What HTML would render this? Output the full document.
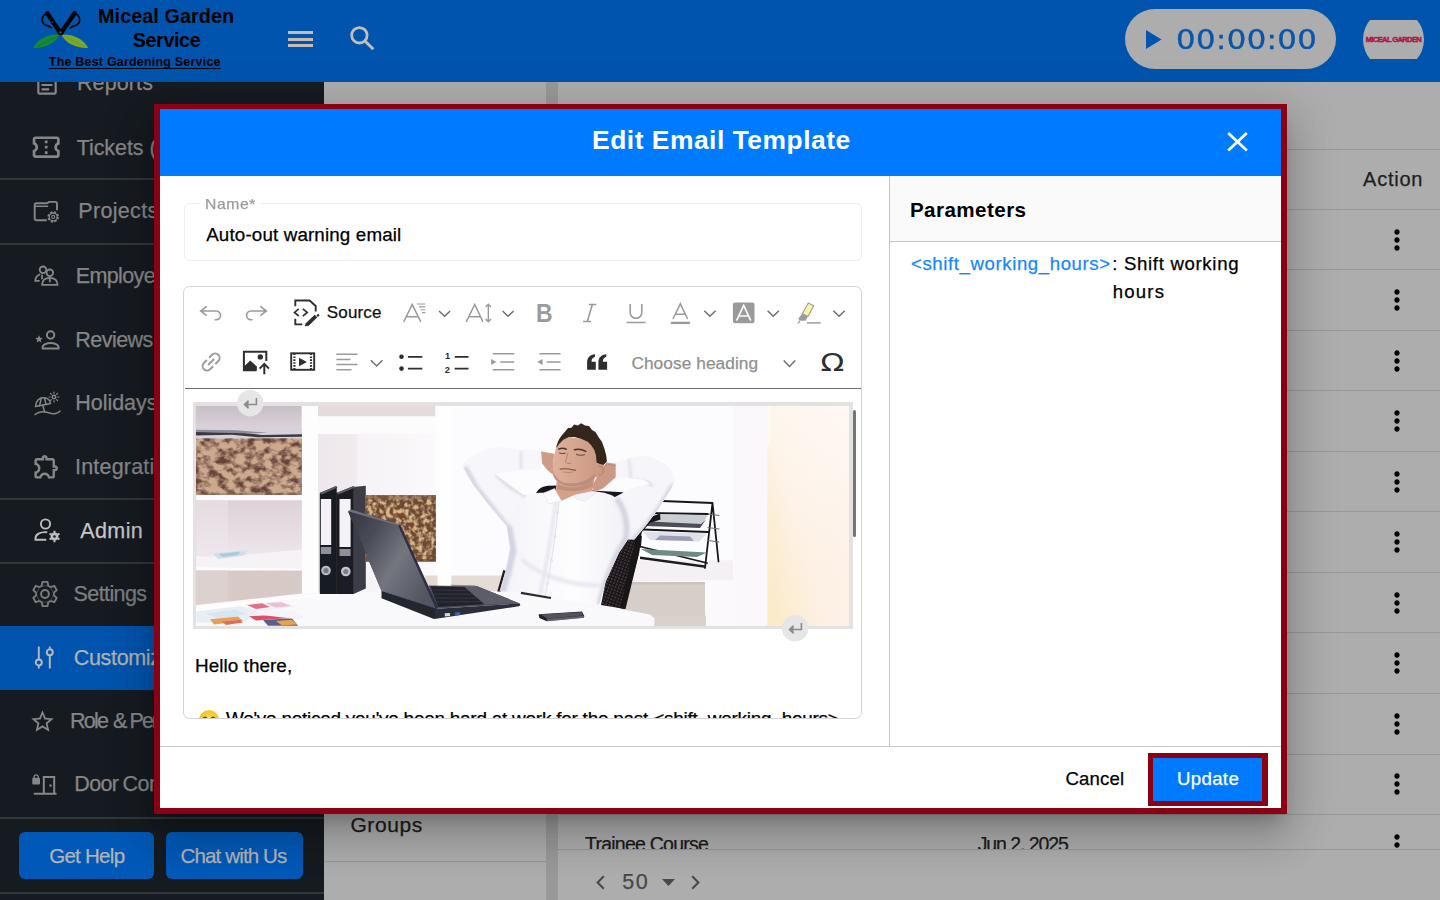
<!DOCTYPE html>
<html lang="en">
<head>
<meta charset="utf-8">
<title>Edit Email Template</title>
<style>
*{box-sizing:border-box;margin:0;padding:0}
html,body{width:1440px;height:900px;overflow:hidden;background:#adadad;font-family:"Liberation Sans",sans-serif;color:#000}
.abs{position:absolute}
.t{position:absolute;white-space:nowrap;line-height:1}
svg{position:absolute;overflow:visible}
#page{position:absolute;left:0;top:0;width:1440px;height:900px;overflow:hidden;background:#adadad}
#topbar{position:absolute;left:0;top:0;width:1440px;height:82px;background:#0054ad;z-index:5}
#sidebar{position:absolute;left:0;top:0;width:324px;height:900px;background:#161b21;overflow:hidden}
.sdiv{position:absolute;left:0;width:324px;height:2px;background:#32373b}
#sactive{position:absolute;left:0;top:626px;width:324px;height:63.5px;background:#0054ad}
.sbtn{position:absolute;top:832px;height:47px;border-radius:6px;background:#0059b8}
.hl{position:absolute;height:1px;background:#979797}
#modal{position:absolute;left:154px;top:104px;width:1133px;height:710px;background:#fff;border:6px solid #8c0014;border-top-width:5px;z-index:20;
 box-shadow:0 11px 15px -7px rgba(0,0,0,.2),0 24px 38px 3px rgba(0,0,0,.14),0 9px 46px 8px rgba(0,0,0,.12)}
#modal .in{position:absolute;left:-160px;top:-109px;width:1440px;height:900px}
#mhead{position:absolute;left:160px;top:109px;width:1121px;height:67px;background:#007bff}

</style>
</head>
<body>
<div id="page">
<div id="sidebar">
<div id="sactive"></div>
<div class="sdiv" style="top:178px"></div>
<div class="sdiv" style="top:243px"></div>
<div class="sdiv" style="top:497.5px"></div>
<div class="sdiv" style="top:561.5px"></div>
<div class="sdiv" style="top:816.5px"></div>
<div class="sdiv" style="top:892px"></div>
<div class="t" style="left:76.94px;top:71.00px;font-size:21.5px;color:#868686;letter-spacing:0.124px;-webkit-text-stroke:.25px;line-height:24px;">Reports</div>
<div class="t" style="left:76.72px;top:136.00px;font-size:21.5px;color:#868686;letter-spacing:-0.073px;-webkit-text-stroke:.25px;line-height:24px;">Tickets (3)</div>
<div class="t" style="left:78.24px;top:199.00px;font-size:21.5px;color:#868686;letter-spacing:0.333px;-webkit-text-stroke:.25px;line-height:24px;">Projects</div>
<div class="t" style="left:75.74px;top:264.00px;font-size:21.5px;color:#868686;letter-spacing:-0.619px;-webkit-text-stroke:.25px;line-height:24px;">Employees</div>
<div class="t" style="left:75.24px;top:328.00px;font-size:21.5px;color:#868686;letter-spacing:-0.518px;-webkit-text-stroke:.25px;line-height:24px;">Reviews</div>
<div class="t" style="left:75.24px;top:391.00px;font-size:21.5px;color:#868686;letter-spacing:-0.033px;-webkit-text-stroke:.25px;line-height:24px;">Holidays</div>
<div class="t" style="left:75.02px;top:455.00px;font-size:21.5px;color:#868686;letter-spacing:0.203px;-webkit-text-stroke:.25px;line-height:24px;">Integrations</div>
<div class="t" style="left:80.16px;top:519.00px;font-size:21.5px;color:#c6c6c6;letter-spacing:0.421px;-webkit-text-stroke:.25px;line-height:24px;">Admin</div>
<div class="t" style="left:73.52px;top:582.00px;font-size:21.5px;color:#7e7e7e;letter-spacing:-0.591px;-webkit-text-stroke:.25px;line-height:24px;">Settings</div>
<div class="t" style="left:73.81px;top:646.00px;font-size:21.5px;color:#b2b2b2;letter-spacing:-0.336px;-webkit-text-stroke:.25px;line-height:24px;">Customization</div>
<div class="t" style="left:69.94px;top:709.00px;font-size:21.5px;color:#868686;letter-spacing:-1.700px;-webkit-text-stroke:.25px;line-height:24px;">Role</div>
<div class="t" style="left:112.94px;top:709.00px;font-size:21.5px;color:#868686;-webkit-text-stroke:.25px;line-height:24px;">&amp;</div>
<div class="t" style="left:129.54px;top:709.00px;font-size:21.5px;color:#868686;letter-spacing:-1.894px;-webkit-text-stroke:.25px;line-height:24px;">Permissions</div>
<div class="t" style="left:74.24px;top:772.00px;font-size:21.5px;color:#868686;letter-spacing:-0.630px;-webkit-text-stroke:.25px;line-height:24px;">Door</div>
<div class="t" style="left:122.51px;top:772.00px;font-size:21.5px;color:#868686;letter-spacing:-0.490px;-webkit-text-stroke:.25px;line-height:24px;">Control</div>
<svg style="left:34.15px;top:71.65px" width="26" height="26" viewBox="0 0 24 24" ><path fill="#878787" d="M19 5v14H5V5h14m0-2H5c-1.1 0-2 .9-2 2v14c0 1.1.9 2 2 2h14c1.1 0 2-.9 2-2V5c0-1.1-.9-2-2-2zm-5 14H7v-2h7v2zm3-4H7v-2h10v2zm0-4H7V7h10v2z"/></svg>
<svg style="left:30.2px;top:130.8px" width="32.4" height="32.4" viewBox="0 0 24 24" ><path fill="#878787" d="M22 10V6c0-1.11-.9-2-2-2H4c-1.1 0-1.99.89-1.99 2v4c1.1 0 1.99.9 1.99 2s-.89 2-2 2v4c0 1.1.9 2 2 2h16c1.1 0 2-.9 2-2v-4c-1.1 0-2-.9-2-2s.9-2 2-2zm-2-1.46c-1.19.69-2 1.99-2 3.46s.81 2.77 2 3.46V18H4v-2.54c1.19-.69 2-1.99 2-3.46 0-1.48-.8-2.77-1.99-3.46L4 6h16v2.54zM11 15h2v2h-2zm0-4h2v2h-2zm0-4h2v2h-2z"/></svg>
<svg style="left:33px;top:199.5px" width="27" height="23" viewBox="0 0 27 23" ><path d="M13.800 20.300H3.500C2.500 20.300 1.700 19.500 1.700 18.500V5C1.700 4 2.500 3.200 3.500 3.200H14L16.200 1.900H22.200C23.200 1.900 24 2.700 24 3.700V10.300" fill="none" stroke="#878787" stroke-width="1.900" stroke-linejoin="round"/><path d="M1.700 6.300H15.200" stroke="#878787" stroke-width="1.500" fill="none"/><circle cx="20.200" cy="16.900" r="4.900" fill="none" stroke="#878787" stroke-width="1.700" stroke-dasharray="2.300 1.550"/><circle cx="20.200" cy="16.900" r="3.900" fill="none" stroke="#878787" stroke-width="1.300"/><circle cx="20.200" cy="16.900" r="1.500" fill="none" stroke="#878787" stroke-width="1.100"/></svg>
<svg style="left:34px;top:265px" width="25" height="21" viewBox="0 0 25 21" ><g fill="none" stroke="#878787" stroke-width="1.800" stroke-linecap="round" stroke-linejoin="round"><circle cx="9" cy="4.800" r="3.300"/><path d="M5.500 9.500C2.800 10.800 1.400 13.400 1.200 15.800H5"/><circle cx="15.800" cy="7.800" r="3.300"/><path d="M8 19.800c.2-4.200 3-7 7.800-7s7.600 2.800 7.800 7z"/><path d="M15.800 13v3.500M8 10.500v3"/></g></svg>
<svg style="left:34px;top:329.5px" width="26" height="20" viewBox="0 0 26 20" ><path fill="#878787" d="M5 5.200l1.100 2.600 2.800.2-2.150 1.850.650 2.750L5 11.100 2.600 12.600l.650-2.750L1.100 8l2.800-.2z"/><g fill="none" stroke="#878787" stroke-width="2"><circle cx="16.600" cy="5" r="3.700"/><path d="M8.600 18.600v-1.400c0-2.700 4.400-4.200 8-4.200s8 1.500 8 4.200v1.400z" stroke-linejoin="round"/></g></svg>
<svg style="left:33.5px;top:390.5px" width="27" height="25" viewBox="0 0 27 25" ><g fill="none" stroke="#878787" stroke-width="1.500" stroke-linecap="round"><path d="M1.500 15.500C1.500 10 5.500 6.200 10.500 6.800 14 7.200 16 9.500 16.500 12.500z" stroke-linejoin="round"/><path d="M7.200 7.300L5.500 15M10.500 6.800l1.500 6.800M8.800 14.200l1.700 6.300"/><path d="M1 23.500c3-2.500 6.500-3 10-2.500s7 2.500 10.500 1.500 4-2 4.500-2.500"/><circle cx="20" cy="6" r="1.700"/><path d="M20 1v1.300M20 9.700V11M15 6h1.300M23.700 6H25M16.500 2.500l.9.900M22.600 8.600l.9.900M23.500 2.500l-.9.900M17.400 8.600l-.9.900" stroke-width="1.200"/></g></svg>
<svg style="left:32px;top:452.3px" width="29" height="29" viewBox="0 0 24 24" ><path fill="#878787" d="M10.500 4.500c.280 0 .500.220.500.500v2h6v6h2c.280 0 .500.220.500.500s-.220.500-.500.500h-2v6h-2.120c-.680-1.750-2.390-3-4.380-3s-3.700 1.250-4.380 3H4v-2.120c1.750-.680 3-2.390 3-4.380 0-1.990-1.240-3.700-2.990-4.380L4 7h6V5c0-.280.220-.500.500-.500m0-2C9.120 2.500 8 3.620 8 5H4c-1.100 0-1.990.900-1.990 2v3.800h.290c1.490 0 2.700 1.210 2.700 2.700s-1.210 2.700-2.700 2.700H2V20c0 1.100.900 2 2 2h3.800v-.300c0-1.490 1.210-2.700 2.700-2.700s2.700 1.210 2.700 2.700v.300H17c1.100 0 2-.900 2-2v-4c1.380 0 2.500-1.120 2.500-2.500S20.380 11 19 11V7c0-1.100-.900-2-2-2h-4c0-1.380-1.120-2.500-2.500-2.500z"/></svg>
<svg style="left:33.5px;top:518px" width="27" height="25" viewBox="0 0 27 25" ><g fill="none" stroke="#bdbdbd" stroke-width="1.900" stroke-linecap="round"><circle cx="11.500" cy="6" r="4.600"/><path d="M12.500 14.200c-6.500-.5-11 2.200-11 6v1.600h10"/></g><g fill="none" stroke="#bdbdbd"><circle cx="20.500" cy="18.500" r="2.600" stroke-width="2.600"/><path d="M20.500 12.800v11.400M15.560 15.650l9.880 5.700M15.560 21.350l9.880-5.700" stroke-width="2"/></g><circle cx="20.500" cy="18.500" r="1.300" fill="#171c20"/></svg>
<svg style="left:31.5px;top:580.7px" width="26" height="26" viewBox="-13 -13 26 26" ><circle r="8.800" fill="none" stroke="#7c7c7c" stroke-width="1.900"/><path d="M-3.300 -8.200L-2.500 -12.100H2.500L3.300 -8.200" transform="rotate(0)" fill="#171c20" stroke="#7c7c7c" stroke-width="1.900" stroke-linejoin="round"/><path d="M-3.300 -8.200L-2.500 -12.100H2.500L3.300 -8.200" transform="rotate(60)" fill="#171c20" stroke="#7c7c7c" stroke-width="1.900" stroke-linejoin="round"/><path d="M-3.300 -8.200L-2.500 -12.100H2.500L3.300 -8.200" transform="rotate(120)" fill="#171c20" stroke="#7c7c7c" stroke-width="1.900" stroke-linejoin="round"/><path d="M-3.300 -8.200L-2.500 -12.100H2.500L3.300 -8.200" transform="rotate(180)" fill="#171c20" stroke="#7c7c7c" stroke-width="1.900" stroke-linejoin="round"/><path d="M-3.300 -8.200L-2.500 -12.100H2.500L3.300 -8.200" transform="rotate(240)" fill="#171c20" stroke="#7c7c7c" stroke-width="1.900" stroke-linejoin="round"/><path d="M-3.300 -8.200L-2.500 -12.100H2.500L3.300 -8.200" transform="rotate(300)" fill="#171c20" stroke="#7c7c7c" stroke-width="1.900" stroke-linejoin="round"/><circle r="7.850" fill="#171c20"/><circle r="3.900" fill="none" stroke="#7c7c7c" stroke-width="2"/></svg>
<svg style="left:33.5px;top:646px" width="21" height="23" viewBox="0 0 21 23" ><g fill="none" stroke="#b9b9b9" stroke-width="1.900"><path d="M4.800 .5v13.200M4.800 19.500v3M15.800 .5v2M15.800 9.300V22.500"/><circle cx="4.800" cy="16.500" r="3"/><circle cx="15.800" cy="6.200" r="3"/></g></svg>
<svg style="left:28.8px;top:708px" width="27" height="27" viewBox="0 0 24 24" ><path fill="#878787" d="M22 9.24l-7.19-.62L12 2 9.19 8.63 2 9.24l5.46 4.73L5.82 21 12 17.270 18.180 21l-1.630-7.030L22 9.240zM12 15.400l-3.760 2.270 1-4.280-3.320-2.880 4.380-.380L12 6.100l1.710 4.040 4.380.380-3.320 2.880 1 4.280L12 15.400z"/></svg>
<svg style="left:31.5px;top:773.5px" width="25" height="21" viewBox="0 0 25 21" ><rect x=".3" y="3.800" width="7.700" height="6.600" rx="1" fill="#878787"/><path d="M2 4V3a2.150 2.150 0 0 1 4.300 0v1" fill="none" stroke="#878787" stroke-width="1.300"/><path d="M11.800 19.500V3h10.400v16.500M1.800 19.800h22.700" fill="none" stroke="#878787" stroke-width="2"/><circle cx="18.500" cy="11.500" r="1.200" fill="#878787"/></svg>
<div class="sbtn" style="left:19px;width:135px"></div>
<div class="sbtn" style="left:166px;width:137px"></div>
<div class="t" style="left:49.17px;top:844.00px;font-size:20.5px;color:#b4b4b4;letter-spacing:-0.716px;-webkit-text-stroke:.25px;line-height:23px;">Get Help</div>
<div class="t" style="left:180.56px;top:844.00px;font-size:20.5px;color:#b4b4b4;letter-spacing:-0.858px;-webkit-text-stroke:.25px;line-height:23px;">Chat with Us</div>
</div>
<div id="content">
<div class="abs" style="left:545.5px;top:82px;width:12.5px;height:818px;background:#999"></div>
<div class="hl" style="left:324px;width:221.5px;top:860.5px"></div>
<div class="t" style="left:350.44px;top:813.00px;font-size:21px;color:#1b1b1b;letter-spacing:0.588px;-webkit-text-stroke:.25px;line-height:23px;">Groups</div>
<div class="hl" style="left:558px;width:882px;top:148.5px"></div>
<div class="hl" style="left:558px;width:882px;top:208.5px"></div>
<div class="hl" style="left:558px;width:882px;top:269px"></div>
<div class="hl" style="left:558px;width:882px;top:329.5px"></div>
<div class="hl" style="left:558px;width:882px;top:390px"></div>
<div class="hl" style="left:558px;width:882px;top:450.5px"></div>
<div class="hl" style="left:558px;width:882px;top:511px"></div>
<div class="hl" style="left:558px;width:882px;top:571.5px"></div>
<div class="hl" style="left:558px;width:882px;top:632px"></div>
<div class="hl" style="left:558px;width:882px;top:692.5px"></div>
<div class="hl" style="left:558px;width:882px;top:753.5px"></div>
<div class="hl" style="left:558px;width:882px;top:814px"></div>
<div class="hl" style="left:558px;width:882px;top:848.5px"></div>
<div class="t" style="left:1363.06px;top:168.00px;font-size:20px;color:#1e1e1e;letter-spacing:0.769px;-webkit-text-stroke:.25px;line-height:22px;">Action</div>
<svg style="left:1381.4px;top:223.6px" width="32" height="32" viewBox="0 0 24 24"><path fill="#000" d="M12 8c1.1 0 2-.9 2-2s-.9-2-2-2-2 .9-2 2 .9 2 2 2zm0 2c-1.100 0-2 .9-2 2s.9 2 2 2 2-.9 2-2-.9-2-2-2zm0 6c-1.100 0-2 .9-2 2s.9 2 2 2 2-.9 2-2-.9-2-2-2z"/></svg>
<svg style="left:1381.4px;top:284.1px" width="32" height="32" viewBox="0 0 24 24"><path fill="#000" d="M12 8c1.1 0 2-.9 2-2s-.9-2-2-2-2 .9-2 2 .9 2 2 2zm0 2c-1.100 0-2 .9-2 2s.9 2 2 2 2-.9 2-2-.9-2-2-2zm0 6c-1.100 0-2 .9-2 2s.9 2 2 2 2-.9 2-2-.9-2-2-2z"/></svg>
<svg style="left:1381.4px;top:344.6px" width="32" height="32" viewBox="0 0 24 24"><path fill="#000" d="M12 8c1.1 0 2-.9 2-2s-.9-2-2-2-2 .9-2 2 .9 2 2 2zm0 2c-1.100 0-2 .9-2 2s.9 2 2 2 2-.9 2-2-.9-2-2-2zm0 6c-1.100 0-2 .9-2 2s.9 2 2 2 2-.9 2-2-.9-2-2-2z"/></svg>
<svg style="left:1381.4px;top:405.2px" width="32" height="32" viewBox="0 0 24 24"><path fill="#000" d="M12 8c1.1 0 2-.9 2-2s-.9-2-2-2-2 .9-2 2 .9 2 2 2zm0 2c-1.100 0-2 .9-2 2s.9 2 2 2 2-.9 2-2-.9-2-2-2zm0 6c-1.100 0-2 .9-2 2s.9 2 2 2 2-.9 2-2-.9-2-2-2z"/></svg>
<svg style="left:1381.4px;top:465.7px" width="32" height="32" viewBox="0 0 24 24"><path fill="#000" d="M12 8c1.1 0 2-.9 2-2s-.9-2-2-2-2 .9-2 2 .9 2 2 2zm0 2c-1.100 0-2 .9-2 2s.9 2 2 2 2-.9 2-2-.9-2-2-2zm0 6c-1.100 0-2 .9-2 2s.9 2 2 2 2-.9 2-2-.9-2-2-2z"/></svg>
<svg style="left:1381.4px;top:526.2px" width="32" height="32" viewBox="0 0 24 24"><path fill="#000" d="M12 8c1.1 0 2-.9 2-2s-.9-2-2-2-2 .9-2 2 .9 2 2 2zm0 2c-1.100 0-2 .9-2 2s.9 2 2 2 2-.9 2-2-.9-2-2-2zm0 6c-1.100 0-2 .9-2 2s.9 2 2 2 2-.9 2-2-.9-2-2-2z"/></svg>
<svg style="left:1381.4px;top:586.7px" width="32" height="32" viewBox="0 0 24 24"><path fill="#000" d="M12 8c1.1 0 2-.9 2-2s-.9-2-2-2-2 .9-2 2 .9 2 2 2zm0 2c-1.100 0-2 .9-2 2s.9 2 2 2 2-.9 2-2-.9-2-2-2zm0 6c-1.100 0-2 .9-2 2s.9 2 2 2 2-.9 2-2-.9-2-2-2z"/></svg>
<svg style="left:1381.4px;top:647.2px" width="32" height="32" viewBox="0 0 24 24"><path fill="#000" d="M12 8c1.1 0 2-.9 2-2s-.9-2-2-2-2 .9-2 2 .9 2 2 2zm0 2c-1.100 0-2 .9-2 2s.9 2 2 2 2-.9 2-2-.9-2-2-2zm0 6c-1.100 0-2 .9-2 2s.9 2 2 2 2-.9 2-2-.9-2-2-2z"/></svg>
<svg style="left:1381.4px;top:707.8px" width="32" height="32" viewBox="0 0 24 24"><path fill="#000" d="M12 8c1.1 0 2-.9 2-2s-.9-2-2-2-2 .9-2 2 .9 2 2 2zm0 2c-1.100 0-2 .9-2 2s.9 2 2 2 2-.9 2-2-.9-2-2-2zm0 6c-1.100 0-2 .9-2 2s.9 2 2 2 2-.9 2-2-.9-2-2-2z"/></svg>
<svg style="left:1381.4px;top:768.3px" width="32" height="32" viewBox="0 0 24 24"><path fill="#000" d="M12 8c1.1 0 2-.9 2-2s-.9-2-2-2-2 .9-2 2 .9 2 2 2zm0 2c-1.100 0-2 .9-2 2s.9 2 2 2 2-.9 2-2-.9-2-2-2zm0 6c-1.100 0-2 .9-2 2s.9 2 2 2 2-.9 2-2-.9-2-2-2z"/></svg>
<svg style="left:1381.4px;top:828.8px;clip-path:inset(0 0 12.3px 0)" width="32" height="32" viewBox="0 0 24 24"><path fill="#000" d="M12 8c1.1 0 2-.9 2-2s-.9-2-2-2-2 .9-2 2 .9 2 2 2zm0 2c-1.100 0-2 .9-2 2s.9 2 2 2 2-.9 2-2-.9-2-2-2zm0 6c-1.100 0-2 .9-2 2s.9 2 2 2 2-.9 2-2-.9-2-2-2z"/></svg>
<div class="abs" style="left:558px;top:820px;width:882px;height:28.5px;overflow:hidden">
<div class="t" style="left:27.06px;top:13.00px;font-size:19.5px;color:#1b1b1b;letter-spacing:-0.760px;-webkit-text-stroke:.25px;line-height:22px;">Trainee Course</div>
<div class="t" style="left:419.70px;top:13.00px;font-size:19.5px;color:#1b1b1b;letter-spacing:-1.080px;-webkit-text-stroke:.25px;line-height:22px;">Jun 2, 2025</div>
</div>
<svg style="left:596px;top:874.5px" width="9" height="15" viewBox="0 0 9 15" ><path d="M7.800 1.200L1.600 7.500l6.200 6.300" fill="none" stroke="#484848" stroke-width="2"/></svg>
<svg style="left:691px;top:874.5px" width="9" height="15" viewBox="0 0 9 15" ><path d="M1.200 1.200L7.400 7.500 1.200 13.800" fill="none" stroke="#484848" stroke-width="2"/></svg>
<svg style="left:661.5px;top:878.5px" width="13" height="7" viewBox="0 0 13 7" ><path d="M0 0h13L6.500 7z" fill="#484848"/></svg>
<div class="t" style="left:622.14px;top:870.00px;font-size:21.5px;color:#484848;letter-spacing:1.779px;-webkit-text-stroke:.25px;line-height:24px;">50</div>
</div>
<div id="topbar">
<svg style="left:30px;top:8px" width="62" height="44" viewBox="30 8 62 44" ><path d="M33.300 48C36 40.500 47 33.800 59.600 34.300 56.500 42.500 45 48.500 33.300 48z" fill="#178a34"/><path d="M88 48C85.300 40.500 74.300 33.800 61.400 34.500 64.500 42.500 76.300 48.500 88 48z" fill="#7ba82a"/><path d="M37 46.500C44 43 51 39.500 57.500 36" stroke="#0f6f28" stroke-width=".7" fill="none"/><path d="M84.500 46.500C77.500 43 70.500 39.500 63.500 36" stroke="#6a9424" stroke-width=".7" fill="none"/><g fill="none" stroke="#050505" stroke-linecap="round"><path d="M47.300 13.300L59.800 32" stroke-width="4.600"/><path d="M74.600 13.300L61.600 32" stroke-width="4.600"/><path d="M46.300 13.800C43.800 14.800 42.300 17 42.300 20 42.300 23 44.300 24.800 47 25.600 48.800 26.100 50.300 26.800 51.600 27.900" stroke-width="1.700"/><path d="M75.600 13.800C78.100 14.800 79.600 17 79.600 20 79.600 23 77.600 24.800 74.900 25.600 73.100 26.100 71.600 26.800 70.300 27.900" stroke-width="1.700"/></g><circle cx="60.600" cy="32" r="3.300" fill="#050505"/><circle cx="60.600" cy="32.400" r="1.050" fill="#2a63a8"/><circle cx="52.300" cy="22" r=".7" fill="#2a63a8"/></svg>
<div class="t" style="left:98.08px;top:5.00px;font-size:19.8px;font-weight:700;color:#000;letter-spacing:0.060px;line-height:22px;">Miceal Garden</div>
<div class="t" style="left:132.73px;top:29.00px;font-size:19.8px;font-weight:700;color:#000;letter-spacing:-0.410px;line-height:22px;">Service</div>
<div class="t" style="left:48.86px;top:55.00px;font-size:12.4px;font-weight:700;color:#000;letter-spacing:0.252px;line-height:14px;text-decoration:underline;text-decoration-thickness:1.2px;text-underline-offset:1.5px;">The Best Gardening Service</div>
<div class="abs" style="left:288px;top:31px;width:25px;height:3px;background:#c6beb6"></div>
<div class="abs" style="left:288px;top:37.600px;width:25px;height:3px;background:#c6beb6"></div>
<div class="abs" style="left:288px;top:44.300px;width:25px;height:3px;background:#c6beb6"></div>
<svg style="left:349px;top:25px" width="27" height="27" viewBox="0 0 27 27" ><circle cx="10.400" cy="10.300" r="7.700" fill="none" stroke="#c6beb6" stroke-width="2.800"/><path d="M16 16l8.300 8.300" stroke="#c6beb6" stroke-width="3" fill="none"/></svg>
<div class="abs" style="left:1125px;top:9px;width:211px;height:59.500px;border-radius:30px;background:#adadad"></div>
<svg style="left:1146px;top:29.5px" width="16" height="19" viewBox="0 0 16 19" ><path d="M0 0l15.500 9.500L0 19z" fill="#0054ad"/></svg>
<div class="t" style="left:1175.97px;top:25.00px;font-size:26.5px;font-family:'DejaVu Sans',sans-serif;color:#0756ad;letter-spacing:0.344px;line-height:30px;transform:scaleX(1.16);transform-origin:0 50%;-webkit-text-stroke:.35px #0756ad;">00:00:00</div>
<div class="abs" style="left:1362.500px;top:20px;width:61.500px;height:38.500px;overflow:hidden"><div class="abs" style="left:0;top:-11.500px;width:61.500px;height:61.500px;border-radius:50%;background:#adadad"></div></div>
<div class="t" style="left:1365.79px;top:35.00px;font-size:7.6px;font-weight:700;color:#b01345;letter-spacing:-0.665px;line-height:9px;-webkit-text-stroke:.45px #b01345;">MICEAL GARDEN</div>
</div>
</div>
<div id="modal"><div class="in">
<div id="mhead"></div>
<div class="t" style="left:592.03px;top:125.00px;font-size:26.4px;font-weight:700;color:#fff;letter-spacing:0.519px;line-height:30px;">Edit Email Template</div>
<svg style="left:1226.5px;top:131.5px" width="21" height="19.5" viewBox="0 0 21 19.500"><path d="M1.200 1L19.800 18.500M19.800 1L1.200 18.500" stroke="#fff" stroke-width="2.700" fill="none"/></svg>
<div class="abs" style="left:888.900px;top:176px;width:1.500px;height:570.500px;background:#c6c6c6"></div>
<div class="abs" style="left:890.400px;top:176px;width:390.600px;height:66.300px;background:#fafafa;border-bottom:1.500px solid #c4c4c4"></div>
<div class="t" style="left:909.92px;top:198.00px;font-size:20.6px;font-weight:700;color:#000;letter-spacing:0.436px;line-height:23px;">Parameters</div>
<div class="t" style="left:910.98px;top:253.00px;font-size:18.6px;color:#1787ff;letter-spacing:0.602px;-webkit-text-stroke:.25px;line-height:21px;">&lt;shift_working_hours&gt;</div>
<div class="t" style="left:1112.30px;top:253.00px;font-size:18.6px;color:#000;letter-spacing:0.673px;-webkit-text-stroke:.25px;line-height:21px;">: Shift working</div>
<div class="t" style="left:1112.71px;top:281.00px;font-size:18.6px;color:#000;letter-spacing:1.187px;-webkit-text-stroke:.25px;line-height:21px;">hours</div>
<div class="abs" style="left:183.800px;top:203px;width:678px;height:58px;border:1.600px solid #efefef;border-radius:6px"></div>
<div class="abs" style="left:199.500px;top:201px;width:61.500px;height:6px;background:#fff"></div>
<div class="t" style="left:204.51px;top:196.00px;font-size:14.3px;color:#9b9b9b;letter-spacing:0.514px;-webkit-text-stroke:.25px;line-height:16px;transform:scaleX(1.1);transform-origin:0 50%;">Name*</div>
<div class="t" style="left:206.21px;top:224.00px;font-size:18.8px;color:#000;letter-spacing:0.141px;-webkit-text-stroke:.25px;line-height:21px;">Auto-out warning email</div>
<div class="abs" style="left:183.400px;top:286.100px;width:678.600px;height:433.300px;border:1.900px solid #d3d3d3;border-radius:6.500px;overflow:hidden"></div>
<div class="abs" style="left:185px;top:387.800px;width:676px;height:1.300px;background:#6f6f6f"></div>
<svg style="left:184px;top:287px" width="678" height="102" viewBox="184 287 678 102"><path d="M206.800 306.300L200.700 311L206.800 315.700M201 311H216.200A4.350 4.350 0 0 1 216.200 319.700H214.600" fill="none" stroke="#9a9a9a" stroke-width="1.600"/><path d="M260.300 306.300L266.400 311L260.300 315.700M266.100 311H250.900A4.350 4.350 0 0 0 250.900 319.700H252.500" fill="none" stroke="#9a9a9a" stroke-width="1.600"/><path d="M295.300 306.200V300.500H309.600L315.700 306V311.400M295.300 318.800V324.400H302.300" fill="none" stroke="#2e2e2e" stroke-width="1.900"/><path d="M298.800 308.800L294.500 312.400L298.800 316.100M302.800 308.800L307.200 312.400L302.800 316.100" fill="none" stroke="#2e2e2e" stroke-width="1.700"/><path d="M306.600 325.200L316 316" stroke="#2e2e2e" stroke-width="3.800" fill="none"/><path d="M317.300 314.600L318.800 316.100" stroke="#2e2e2e" stroke-width="2.400" fill="none"/><path d="M304.800 326.400l2.600-.6-2-2z" fill="#2e2e2e"/><path d="M403.700 321.900L412.200 304.400L420.800 321.900M406.700 316.800H417.900" fill="none" stroke="#9a9a9a" stroke-width="1.500"/><path d="M416.900 304H425.300M419 306.900H425.300M420.500 309.800H425.300M422 312.600H425.300" fill="none" stroke="#9a9a9a" stroke-width="1.100"/><path d="M439 311L444.6 316.2L450.1 311" fill="none" stroke="#6e6e6e" stroke-width="1.500"/><path d="M466.200 321.900L474.800 304.400L483 321.900M469.300 316.800H480.200" fill="none" stroke="#9a9a9a" stroke-width="1.500"/><path d="M488.300 304.500V321.500M485.600 307L488.300 304.200L491 307M485.600 319L488.300 321.800L491 319" fill="none" stroke="#9a9a9a" stroke-width="1.400"/><path d="M502.6 311L508 316.2L513.6 311" fill="none" stroke="#6e6e6e" stroke-width="1.500"/><text x="535.900" y="321.900" font-family="'Liberation Sans',sans-serif" font-weight="700" font-size="26" fill="#9a9a9a" textLength="16.600" lengthAdjust="spacingAndGlyphs">B</text><path d="M588.800 304.500H596.300M583.100 321.500H590.900M592.300 304.500L587.300 321.500" fill="none" stroke="#9a9a9a" stroke-width="1.600"/><path d="M630.200 304V312.500A5.800 5.800 0 0 0 641.800 312.500V304M626.500 322.500H645.600" fill="none" stroke="#9a9a9a" stroke-width="1.600"/><path d="M672.900 319L680.300 303.800L687.700 319M675.300 314.200H685.300" fill="none" stroke="#9a9a9a" stroke-width="1.500"/><path d="M670.800 322.900H689.900" stroke="#9a9a9a" stroke-width="2.300" fill="none"/><path d="M704.3 310.8L709.9 316.3L715.6 310.8" fill="none" stroke="#6e6e6e" stroke-width="1.500"/><rect x="732.900" y="302.400" width="21.600" height="20.900" rx="2.200" fill="#9a9a9a"/><path d="M736.600 320.600L743.700 305.500L750.800 320.600M738.900 316H748.500" fill="none" stroke="#fff" stroke-width="1.600"/><path d="M767.6 310.8L773.2 316.3L778.9 310.8" fill="none" stroke="#6e6e6e" stroke-width="1.500"/><path d="M808.200 303.100L813.700 305.700L808 316.500L802.300 313.800Z" fill="#f8f4a2" stroke="#9a9a9a" stroke-width="1.100"/><path d="M802.300 313.800L808 316.500L805.400 320.700H799.400L798.500 318.200ZM799.400 320.700L796.400 324.200L800.500 322.300Z" fill="#9a9a9a"/><path d="M807 322.900H820.600" stroke="#9a9a9a" stroke-width="1.500" fill="none"/><path d="M833.4 310.8L839.1 316.3L844.7 310.8" fill="none" stroke="#6e6e6e" stroke-width="1.500"/><g transform="rotate(-45 211.100 362)" fill="none" stroke="#9a9a9a" stroke-width="1.900"><path d="M209.500 357.600H205.300A4.400 4.400 0 0 0 205.300 366.400H209.500M212.700 357.600H216.900A4.400 4.400 0 0 1 216.900 366.400H212.700M206.800 362H215.400"/></g><path d="M266.300 361V351.700H243.900V370.300H256.500" fill="none" stroke="#2e2e2e" stroke-width="2"/><path d="M243.900 370.300V366.500L250.300 360.600L256.900 366.600V370.300Z" fill="#2e2e2e"/><circle cx="260.300" cy="356.900" r="2.700" fill="#2e2e2e"/><path d="M264.300 374.300V364.200M259.600 368.600L264.300 363.900L269 368.600" fill="none" stroke="#2e2e2e" stroke-width="2"/><rect x="291.200" y="353.300" width="23" height="16.500" fill="none" stroke="#2e2e2e" stroke-width="1.900"/><path d="M294.400 353.500V369.500M311 353.500V369.500" stroke="#2e2e2e" stroke-width="2.200" stroke-dasharray="1.600 1.300" fill="none"/><path d="M299 357.700L306.900 362L299 366.300Z" fill="#2e2e2e"/><path d="M336.400 354.200H357.500M336.400 359.400H350.600M336.400 364.600H357.500M336.400 369.800H351.500" fill="none" stroke="#9a9a9a" stroke-width="1.500"/><path d="M370.9 360.3L376.6 366L382.4 360.3" fill="none" stroke="#6e6e6e" stroke-width="1.500"/><circle cx="401.500" cy="356.800" r="2.300" fill="#2e2e2e"/><circle cx="401.500" cy="368.600" r="2.300" fill="#2e2e2e"/><path d="M407.900 356.800H422.300M407.900 368.600H422.300" stroke="#2e2e2e" stroke-width="1.800" fill="none"/><text x="444.900" y="359.400" font-family="'Liberation Sans',sans-serif" font-weight="700" font-size="9.300" fill="#2e2e2e">1</text><text x="444.700" y="373.300" font-family="'Liberation Sans',sans-serif" font-weight="700" font-size="9.300" fill="#2e2e2e">2</text><path d="M454.700 356.800H468.500M454.700 368.600H468.500" stroke="#2e2e2e" stroke-width="1.800" fill="none"/><path d="M492.800 353.800H514.200M500.300 362H514.200M492.800 369.800H514.200" fill="none" stroke="#9a9a9a" stroke-width="1.500"/><path d="M491.100 358.900L496.400 362L491.100 365.100Z" fill="#9a9a9a"/><path d="M539.400 353.800H560.600M546.700 362H560.600M539.400 369.800H560.600" fill="none" stroke="#9a9a9a" stroke-width="1.500"/><path d="M542.600 358.900L537.300 362L542.600 365.100Z" fill="#9a9a9a"/><path d="M587.100 369.800V362.500C587.100 357.500 590 354.700 595 354.200V356.800C592.800 357.400 591.600 359 591.500 361.800H595.800V369.800ZM598.400 369.800V362.500C598.400 357.500 601.300 354.700 606.300 354.200V356.800C604.100 357.400 602.900 359 602.800 361.800H607.100V369.800Z" fill="#2e2e2e"/><path d="M783.7 360.4L789.5 366.4L795.2 360.4" fill="none" stroke="#6e6e6e" stroke-width="1.500"/><text x="820.600" y="371.300" font-family="'DejaVu Sans',sans-serif" font-size="24.500" fill="#2e2e2e" textLength="23.800" lengthAdjust="spacingAndGlyphs">Ω</text></svg>
<div class="t" style="left:326.83px;top:303.00px;font-size:17px;color:#111;letter-spacing:0.150px;-webkit-text-stroke:.25px;line-height:19px;">Source</div>
<div class="t" style="left:631.42px;top:353.00px;font-size:17.3px;color:#8f8f8f;letter-spacing:0.063px;-webkit-text-stroke:.25px;line-height:20px;">Choose heading</div>
<div class="abs" style="left:185.300px;top:389.100px;width:675.200px;height:328.600px;overflow:hidden;border-radius:0 0 4px 4px"><div class="abs" style="left:-185.300px;top:-389.100px;width:1440px;height:900px">
<div class="abs" style="left:193px;top:402.200px;width:660px;height:226.800px;background:#e2e2e2"></div>
<svg style="left:196px;top:405.5px;overflow:hidden" width="653" height="220.5" viewBox="196 405.5 653 220.5" preserveAspectRatio="none">
<defs>
<filter id="cork" x="0" y="0" width="100%" height="100%" color-interpolation-filters="sRGB">
 <feTurbulence type="fractalNoise" baseFrequency="0.11 0.14" numOctaves="3" seed="7" result="n"/>
 <feColorMatrix in="n" type="matrix" values="0 0 0 0 0  0 0 0 0 0  0 0 0 0 0  3.1 0 0 0 -1.22" result="a"/>
 <feFlood flood-color="#65423a" result="c"/>
 <feComposite in="c" in2="a" operator="in" result="d"/>
 <feMerge><feMergeNode in="SourceGraphic"/><feMergeNode in="d"/></feMerge>
 <feComposite in2="SourceGraphic" operator="in"/>
</filter>
<filter id="cork2" x="0" y="0" width="100%" height="100%" color-interpolation-filters="sRGB">
 <feTurbulence type="fractalNoise" baseFrequency="0.22 0.22" numOctaves="2" seed="3" result="n"/>
 <feColorMatrix in="n" type="matrix" values="0 0 0 0 0  0 0 0 0 0  0 0 0 0 0  3.4 0 0 0 -1.35" result="a"/>
 <feFlood flood-color="#d9b88d" result="c"/>
 <feComposite in="c" in2="a" operator="in" result="d"/>
 <feMerge><feMergeNode in="SourceGraphic"/><feMergeNode in="d"/></feMerge>
 <feComposite in2="SourceGraphic" operator="in"/>
</filter>
<filter id="soft" x="-2%" y="-2%" width="104%" height="104%"><feGaussianBlur stdDeviation="0.55"/></filter>
<filter id="soft2" x="-10%" y="-10%" width="120%" height="120%"><feGaussianBlur stdDeviation="1.6"/></filter>
<linearGradient id="gcav2" x1="0" x2="0" y1="0" y2="1"><stop offset="0" stop-color="#ddd1d7"/><stop offset="1" stop-color="#ede6eb"/></linearGradient>
<linearGradient id="gcav1" x1="0" x2="0" y1="0" y2="1"><stop offset="0" stop-color="#c3bac1"/><stop offset="1" stop-color="#dbd3d9"/></linearGradient>
<linearGradient id="gmid" x1="0" x2="1"><stop offset="0" stop-color="#eee7eb"/><stop offset=".32" stop-color="#f1ebee"/><stop offset=".34" stop-color="#f6f2f5"/><stop offset="1" stop-color="#fbf9fb"/></linearGradient>
<linearGradient id="glid" x1="0" x2="1" y1="0" y2=".7"><stop offset="0" stop-color="#33353f"/><stop offset=".3" stop-color="#4a4c57"/><stop offset=".62" stop-color="#74767f"/><stop offset="1" stop-color="#53555f"/></linearGradient>
<linearGradient id="gcream" x1="0" x2="1" y1="0" y2="0"><stop offset="0" stop-color="#fcefdc"/><stop offset=".3" stop-color="#fdf0e3"/><stop offset="1" stop-color="#fdf2ea"/></linearGradient>
<linearGradient id="gcream2" x1="0" x2="0" y1="0" y2="1"><stop offset="0" stop-color="#fff" stop-opacity=".5"/><stop offset=".5" stop-color="#fff" stop-opacity=".15"/><stop offset="1" stop-color="#fbe8c0" stop-opacity=".0"/></linearGradient><linearGradient id="gcream3" x1="0" x2="1" y1="1" y2=".3"><stop offset="0" stop-color="#fae6b4" stop-opacity=".55"/><stop offset=".45" stop-color="#fae6b4" stop-opacity="0"/></linearGradient>
<linearGradient id="gskin" x1="0" x2="1"><stop offset="0" stop-color="#dfb29c"/><stop offset="1" stop-color="#c9957f"/></linearGradient>
<linearGradient id="gshirt" x1="0" x2="1"><stop offset="0" stop-color="#f3f2f7"/><stop offset=".5" stop-color="#fdfdfe"/><stop offset="1" stop-color="#eeedf3"/></linearGradient>
<pattern id="mesh" width="3.2" height="3.2" patternUnits="userSpaceOnUse" patternTransform="rotate(20)"><rect width="3.2" height="3.2" fill="#1d191b"/><rect x=".9" y=".9" width="1.3" height="1.3" fill="#5a4c4a"/></pattern>
</defs>
<g filter="url(#soft)">
<rect x="190" y="400" width="670.00" height="232.00" fill="#fcfbfd" />
<rect x="190" y="400" width="262.00" height="210.00" fill="#fdfcfd" />
<rect x="190" y="400" width="111.70" height="28.50" fill="url(#gcav1)" />
<rect x="190" y="427.5" width="112.00" height="11.00" fill="#d5d2de" />
<polygon points="190,431.5 240,432 262,434.5 302,433.8 302,436.3 258,436.8 232,434.3 190,435" fill="#3b3740" />
<polygon points="190,429.2 236,429.8 268,432.2 250,433 190,431" fill="#8d8a9a" />
<g filter="url(#cork)"><rect x="190" y="437.8" width="112.60" height="56.60" fill="#cdaa8e" /></g>
<rect x="190" y="492.8" width="112.60" height="1.60" fill="#8d6a50" opacity=".55"/>
<rect x="301.2" y="437.8" width="1.60" height="56.20" fill="#9c7a5c" opacity=".5"/>
<rect x="190" y="499.7" width="116.00" height="56.30" fill="url(#gcav2)" />
<rect x="190" y="499.7" width="38.00" height="60.30" fill="#efe8ee" opacity=".45"/>
<polygon points="190,559 306,548.8 306,572 190,569.7" fill="#f6f3f7" />
<polygon points="190,566.5 306,568.5 306,572 190,569.7" fill="#fdfcfe" />
<polygon points="213,553 248,549.5 244,555 218,558.5" fill="#cfdfeb" />
<polygon points="219,553.5 240,551.2 238,554.5 222,556.5" fill="#a9c9de" />
<rect x="190" y="570" width="116.50" height="36.00" fill="#d7c9c5" />
<rect x="190" y="570" width="38.00" height="36.00" fill="#e0d4d3" opacity=".7"/>
<rect x="301.9" y="400" width="16.10" height="200.00" fill="#fdfdfe" />
<rect x="318" y="400" width="117.50" height="16.00" fill="#e6dbdc" />
<rect x="318" y="416" width="117.50" height="17.40" fill="#fdfcfd" />
<rect x="318" y="433.4" width="117.50" height="158.60" fill="url(#gmid)" />
<rect x="435.5" y="400" width="15.80" height="200.00" fill="#fefefe" />
<rect x="451.3" y="575" width="68.70" height="17.00" fill="#e6dcd6" />
<rect x="424.9" y="575" width="12.60" height="17.00" fill="#e4d8d0" />
<rect x="733" y="400" width="35.00" height="232.00" fill="#fbf8fc" />
<rect x="767.4" y="400" width="92.60" height="232.00" fill="url(#gcream)" />
<rect x="767.4" y="400" width="92.60" height="232.00" fill="url(#gcream2)" />
<rect x="767.4" y="400" width="92.60" height="232.00" fill="url(#gcream3)" />
<rect x="767.4" y="400" width="3.10" height="45.00" fill="#fff" opacity=".5"/>
<polygon points="626,560 733.5,560 733.5,632 622,632" fill="#fbf9fb" />
<polygon points="630,560 733,560 733,579.5 626,581" fill="#f4f0f3" />
<rect x="622" y="581.5" width="83.00" height="50.50" fill="#d6cec9" />
<rect x="622" y="581.5" width="83.00" height="2.50" fill="#c6bdb8" opacity=".6"/>
<rect x="650" y="615" width="56.00" height="17.00" fill="#d9d1cc" />
<g fill="none" stroke="#16181a" stroke-linecap="round">
<path d="M662 500.5L712.5 502.5M712.500 502.500L705 567.500M712.500 502.500L718.500 561M640 546L707 562.500M646 512.500L708 513.500M643 529L708 531.500M640 546.500L641 536" stroke-width="1.800"/>
<path d="M708 513.500l11 1.500M708 527l11 1.500M708 540l11 1.500" stroke-width="1.100" stroke="#6a6e72"/>
</g>
<polygon points="646,513.5 708,514.8 701,524.5 648,522.5" fill="#c9ced3" />
<polygon points="650,521 701,523.5 706,519 700,527.5 646,525.5" fill="#4b4e58" />
<polygon points="643,531 707,533 699,541 650,539.5" fill="#dfe1ea" />
<polygon points="660,535 690,536 694,540.5 655,539.5" fill="#9a9eb8" />
<polygon points="641,548.5 707,552 697,556.5 652,554.5" fill="#6f8a86" />
<polygon points="640,556 706,565 706,567.5 640,558.5" fill="#1a1c1e" />
<polygon points="190,605.2 310,592 520,590.4 600,604.4 650,614 654.5,618 654,632 190,632" fill="#f9f8fb" />
<polygon points="190,607 310,594 330,594 190,612" fill="#ffffff" opacity=".7"/>
<g opacity=".9" filter="url(#soft)">
<polygon points="196,611 240,605.5 262,611 246,621 197,622" fill="#e6edf5" />
<polygon points="205,613 236,609 247,613.5 220,618.5" fill="#d6e4f0" />
<polygon points="244.4,603.8 282,600.8 296,606.2 262,610.5" fill="#f3eef3" />
<polygon points="247,604.5 262,602.8 270,606.5 256,608.5" fill="#e0607e" />
<polygon points="266,602.8 281,601.8 291,605.5 276,607" fill="#e9b9cb" />
<polygon points="249,615.8 283,613.8 290,617.5 256,620" fill="#d8405a" />
<polygon points="210,618.8 238,616 243,620.5 214,624" fill="#e8964a" />
<polygon points="222,621 240,619.5 243,622 226,624.5" fill="#d9604a" />
<polygon points="263,619.5 292,617.8 298,625.3 268,625.3" fill="#4c5078" />
<polygon points="276,620.5 292,619.2 297,624 282,625" fill="#e39a3c" />
<polygon points="254,611 292,609 303,616 300,619 262,614.5" fill="#f6f4f8" />
</g>
<polygon points="353.5,486.5 365.8,485.2 365.8,588 353.5,593.5" fill="#3b3c47" />
<polygon points="319.8,492.5 336.2,485.5 336.2,593.5 319.8,593.5" fill="#191a20" />
<polygon points="336.4,492.5 353.8,485.5 353.8,593.5 336.4,593.5" fill="#1d1e25" />
<polygon points="319.8,492.5 336.2,485.5 337.5,487 322,494" fill="#5a5b66" />
<polygon points="336.4,492.5 353.8,485.5 355,487 338.5,494" fill="#5a5b66" />
<rect x="336" y="487" width="1.00" height="106.50" fill="#000" opacity=".6"/>
<rect x="320.8" y="498.5" width="10.40" height="46.00" fill="#f4f2f6" />
<rect x="339.5" y="498.5" width="11.10" height="48.00" fill="#f4f2f6" />
<rect x="320.8" y="546.5" width="10.40" height="7.00" fill="#8f8f9a" />
<rect x="339.5" y="548.5" width="11.10" height="7.00" fill="#8f8f9a" />
<circle cx="326" cy="570" r="4.800" fill="#b9b9c2"/><circle cx="326" cy="570" r="2.600" fill="#77777f"/>
<circle cx="345.800" cy="571" r="4.800" fill="#c4c4cc"/><circle cx="345.800" cy="571" r="2.600" fill="#7d7d86"/>
<g filter="url(#cork2)"><rect x="365.8" y="494.6" width="70.20" height="66.40" fill="#6f4a33" /></g>
<rect x="365.8" y="494.6" width="70.20" height="4.40" fill="#7a5a44" opacity=".55"/>
<rect x="365.8" y="558.5" width="70.20" height="3.00" fill="#5b3d2b" opacity=".6"/>
<polygon points="428.5,584.9 477.2,585.8 519.7,602.9 436.6,608.3" fill="#4d4f5b" />
<polygon points="450,584.3 474,584.8 477.2,585.8 452,585.5" fill="#8b8d97" />
<polygon points="464.6,586.7 477.2,585.8 519.7,602.9 484.5,603.8" fill="#5b5d68" />
<polygon points="430.3,585.8 464.6,586.7 484.5,603.8 438.4,606.5" fill="#22242b" />
<g stroke="#3d3f49" stroke-width=".7" fill="none"><path d="M432.500 589.500L468 590M434 593.500L472.500 593.700M435.500 597.500L477 597.600M437 601.500L481.500 601"/></g>
<polygon points="436.6,608.3 519.7,602.9 520.3,604.7 518.8,605.8 434.5,618.6 433.2,617.5" fill="#2b2d39" />
<polygon points="381.5,590.3 436.6,608.3 434,618.5 381.5,597.8" fill="#23252e" />
<rect x="444.8" y="612.6" width="5.20" height="3.20" fill="#d9d9de" transform="rotate(-4 447 614)"/>
<rect x="454.8" y="611.8" width="5.40" height="3.00" fill="#3a5fc4" transform="rotate(-4 457 613)"/>
<polygon points="348.1,510.8 351.5,509 400.2,524.3 438,606.5 436.6,609 381.5,590.3" fill="#2a2e48" />
<polygon points="348.1,510.8 398.2,525.3 435.6,607.8 381.5,590.3" fill="url(#glid)" />
<polygon points="348.1,510.8 351.5,509 400.2,524.3 398.2,525.3" fill="#7f8190" opacity=".8"/>
<polygon points="538.6,613.8 582,611 584.3,615.6 583.8,617.2 546.8,620.8 539.3,617.6" fill="#23232b" />
<polygon points="540.5,613.9 581.5,611.4 583.2,615 547,618" fill="#53535f" />
<polygon points="547,618.3 583.8,615.2 583.8,617.2 546.8,620.8" fill="#8a8a94" opacity=".6"/>
<path d="M534.500 499C535 491 540 485.600 548 485.200L560 485 596 490.300 623 491.800 626 499.500Z" fill="#16161a"/>
<polygon points="601,604.6 605.6,581.1 618.9,552.2 627.8,538.9 641.3,532 639,552.2 624.5,608.5" fill="url(#mesh)" />
<polygon points="636.5,534.5 641.5,532 639.2,552.2 625.5,608.5 620.5,607.8" fill="#141318" />
<polygon points="640,521 645.6,518.5 660,513 660.5,518.9 650,522.5 643,530 638,538" fill="#15151a" />
<polygon points="503.3,569.5 507,570.5 500.8,591 497.3,591" fill="#1c1c22" />
<clipPath id="cshirt"><path d="M506.700 525.600L494.400 473.300 523.300 494.400C530 492.500 545 491.800 556 492L594 491C604 491.500 612 494 616 497.500L650 483.300 627.800 538.900 618.900 552.200 605.600 581.100 598.900 604.900 574.400 600.700 550 597.100 523.300 592.700 499.700 590.600 505.600 570 510 547.800Z"/><path d="M541.500 449.800L521 449.400 501 446.600C494 446.600 487 448.500 481 451 474 453.500 468.500 457 465.500 460 463 463 462.500 466 464 469L472.200 483.300 487.800 503.300 506.700 525.600 523.300 494.400 505.600 483.300 494.400 473.300 521 469.200 541.500 468.700Z"/><path d="M613.300 462.200L628.900 457.600C634 456 639 455.300 643.300 455.400 649 455.600 654.500 457.500 658.900 460 664 463 668 466 670.500 469 674 473 675.500 478 674.400 482L670 490 658.900 507.800 645.600 525.600 634.400 538.900 627.800 538.900 614 497 631 488 650 483.300 643.300 478.900 631.100 477.800 615.600 476.700Z"/></clipPath>
<path d="M506.700 525.600L494.400 473.300 523.300 494.400C530 492.500 545 491.800 556 492L594 491C604 491.500 612 494 616 497.500L650 483.300 627.800 538.900 618.900 552.200 605.600 581.100 598.900 604.900 574.400 600.700 550 597.100 523.300 592.700 499.700 590.600 505.600 570 510 547.800Z" fill="url(#gshirt)"/><path d="M541.500 449.800L521 449.400 501 446.600C494 446.600 487 448.500 481 451 474 453.500 468.500 457 465.500 460 463 463 462.500 466 464 469L472.200 483.300 487.800 503.300 506.700 525.600 523.300 494.400 505.600 483.300 494.400 473.300 521 469.200 541.500 468.700Z" fill="#f7f7fb"/><path d="M613.300 462.200L628.900 457.600C634 456 639 455.300 643.300 455.400 649 455.600 654.500 457.500 658.900 460 664 463 668 466 670.500 469 674 473 675.500 478 674.400 482L670 490 658.900 507.800 645.600 525.600 634.400 538.900 627.800 538.900 614 497 631 488 650 483.300 643.300 478.900 631.100 477.800 615.600 476.700Z" fill="#f6f6fa"/>
<g clip-path="url(#cshirt)"><g filter="url(#soft2)" fill="none" stroke-linecap="round"><path d="M509 528L513 550 508 572 502 592" stroke="#d3d4e2" stroke-width="7"/><path d="M466 468L476 486 490 504 506 524" stroke="#d6d7e4" stroke-width="5"/><path d="M497 475L508 485 524 495" stroke="#d9dae6" stroke-width="3.500"/><path d="M672 486L660 506 646 525 634 538" stroke="#d6d7e4" stroke-width="5"/><path d="M618 500C626 512 628 524 626 538L616 556 606 580 600 602" stroke="#d4d5e2" stroke-width="6"/><path d="M556 500C552 530 548 560 540 594" stroke="#e2e3ec" stroke-width="3"/><path d="M632 480L646 481 652 485" stroke="#d9dae6" stroke-width="3"/><path d="M521 451V469" stroke="#cfd0de" stroke-width="1.500"/><path d="M629 458L631 478" stroke="#cfd0de" stroke-width="1.500"/><path d="M523 560C540 575 570 585 600 585" stroke="#e6e7ef" stroke-width="4"/></g></g>
<path d="M559 500C556 530 552 562 545 596" fill="none" stroke="#dcdde8" stroke-width=".9"/>
<g fill="#e9e9f0" stroke="#cfd0dc" stroke-width=".4"><circle cx="557.500" cy="512" r="1.100"/><circle cx="555" cy="536" r="1.100"/><circle cx="551.500" cy="560" r="1.100"/><circle cx="547.500" cy="583" r="1.100"/></g>
<path d="M521 592.300L551 597.500" stroke="#2a2a33" stroke-width="2.200" fill="none"/>
<path d="M556.700 481L554.400 496.700 561.100 500.500 574.400 494.400 592.200 491.100 595 476Z" fill="#d3a08a"/>
<path d="M558 484C566 488.500 580 488.500 593 481L592.500 486C582 491.500 568 492 557.500 488Z" fill="#b98873" opacity=".75"/>
<path d="M543 492.800L554.500 488 561.500 500.500 549 503.500Z" fill="#fbfbfd" stroke="#d9dae6" stroke-width=".5"/>
<path d="M574 494.800L592.500 490.600 597 491.500 585 500.500 575.500 498.500Z" fill="#f2f2f8" stroke="#d9dae6" stroke-width=".5"/>
<path d="M541 451L554.500 453.300 553 461.100 553.500 474.500 547.800 470 542.200 463.300Z" fill="#cf9b87"/>
<path d="M592.200 486L600 470 606.700 462 615.700 463.300 615.700 476.700 603.300 487.800 594.400 491.300Z" fill="#cd9884"/>
<path d="M600 472L607 464 615.500 465" fill="none" stroke="#b58070" stroke-width=".7"/>
<path d="M556.200 446.700C558 440.500 563 437.500 570 437L590 439C596 442 598.500 449 598 458L596.700 463.300C601 462 605.300 464.500 605.300 469.500 605 474.500 601.500 477.500 597 476.300L594.400 477.500C592 481.500 588 483.600 583 484.500L574.400 485.700C568 486 562.500 485 558.900 482.200 555 479 553 475.500 553.300 474.400L552.700 461.100Z" fill="url(#gskin)"/>
<path d="M553.500 470C555 477 560 481.500 566 482.500 576 484 588 481 595.500 472.500L594.400 477.500C592 481.500 588 483.600 583 484.500L574.400 485.700C568 486 562.500 485 558.900 482.200 555.500 479.500 553.500 476 553.300 474.400Z" fill="#b48a7a" opacity=".8"/>
<path d="M598.500 466C601.500 465.300 603.300 467.500 603 470.500 602.600 473.500 600.500 475 598.800 474.300" fill="none" stroke="#b07f6c" stroke-width=".9"/>
<path d="M556.200 447.500C557 442 560 436.500 563 433.500L565.600 430.500 568 427.500 571.500 427.200 574 424 578 425 581.100 422.800 585 425 589 425.500 592 429.500 595.500 431.500 598.500 436.500 602 441.500 604.500 448.500 606.300 455.500 606.900 461.100 603.500 464.600 596.700 462.500 596 455 594.400 449.500 591 444.500 587.800 441.300 581 438.300 574.400 436.500 568.500 436.800 563.300 439.200 559.500 443Z" fill="#35251f"/>
<g fill="none" stroke-linecap="round"><path d="M558.700 448.700C561 447.500 564 447.600 566.500 448.800" stroke="#4a332b" stroke-width="1.300"/><path d="M574.500 449.200C578 448.300 582.500 449 585.800 450.800" stroke="#4a332b" stroke-width="1.500"/><path d="M559.500 452.500C561.500 453.300 563.500 453.300 565.300 452.700" stroke="#5b4036" stroke-width="1"/><path d="M576.500 454C579 455 582 455 584.500 454.200" stroke="#5b4036" stroke-width="1"/><path d="M568 452.500L565.300 461.500C566.500 463 569 463.400 571 462.700" stroke="#b07c68" stroke-width=".9"/><path d="M560.300 468.700C563.500 467.600 568 468 575.300 469.800" stroke="#9a5a50" stroke-width="1.400"/><path d="M562.500 471.300C565.500 472.300 569 472.300 572.500 471.500" stroke="#c08a7a" stroke-width="1.200"/></g>
</g>
</svg>
<svg style="left:237.3px;top:390.0px" width="26.400" height="26.400" viewBox="-13.200 -13.200 26.400 26.400"><circle r="13.200" fill="#e6e6e6"/><path d="M6.200 -5.200V1.300H-5M-1.800 -2.300L-5.600 1.300L-1.800 4.900" fill="none" stroke="#8c8c8c" stroke-width="1.600"/><path d="M-6.300 1.300L-1.700 -3V5.600Z" fill="#8c8c8c"/></svg>
<svg style="left:781.5px;top:614.8px" width="26.400" height="26.400" viewBox="-13.200 -13.200 26.400 26.400"><circle r="13.200" fill="#e6e6e6"/><path d="M6.200 -5.200V1.300H-5M-1.800 -2.300L-5.600 1.300L-1.800 4.900" fill="none" stroke="#8c8c8c" stroke-width="1.600"/><path d="M-6.300 1.300L-1.700 -3V5.600Z" fill="#8c8c8c"/></svg>
<div class="t" style="left:194.95px;top:655.00px;font-size:18.9px;color:#000;letter-spacing:0.058px;-webkit-text-stroke:.25px;line-height:21px;">Hello there,</div>
<div class="t" style="left:198.67px;top:712.00px;font-size:16px;font-family:'DejaVu Sans',sans-serif;color:#f5b21a;-webkit-text-stroke:.25px;line-height:17px;">😊</div>
<svg style="left:198.700px;top:710.200px" width="20" height="20" viewBox="0 0 20 20"><defs><radialGradient id="gemo" cx=".5" cy=".42" r=".6"><stop offset="0" stop-color="#ffe066"/><stop offset=".7" stop-color="#fcc21b"/><stop offset="1" stop-color="#f19020"/></radialGradient></defs><circle cx="10" cy="10" r="9.900" fill="url(#gemo)"/><path d="M4.200 8.300C5 6.600 7 6.600 7.800 8.300M12.200 8.300C13 6.600 15 6.600 15.800 8.300" fill="none" stroke="#5a3a1a" stroke-width="1.300" stroke-linecap="round"/><path d="M5 12.500C7 15.500 13 15.500 15 12.500" fill="none" stroke="#5a3a1a" stroke-width="1.200" stroke-linecap="round"/></svg>
<div class="t" style="left:225.92px;top:708.00px;font-size:18.9px;color:#000;letter-spacing:-0.216px;-webkit-text-stroke:.25px;line-height:21px;">We've noticed you've been hard at work for the past &lt;shift_working_hours&gt;</div>
</div></div>
<div class="abs" style="left:853px;top:409.500px;width:3px;height:127.500px;background:#757575;border-radius:1.500px"></div>
<div class="abs" style="left:160px;top:745.800px;width:1121px;height:1.300px;background:#c9c9c9"></div>
<div class="t" style="left:1065.46px;top:768.00px;font-size:18.6px;color:#000;letter-spacing:0.180px;-webkit-text-stroke:.25px;line-height:21px;">Cancel</div>
<div class="abs" style="left:1147.500px;top:752.500px;width:120px;height:53.600px;background:#8c0014"></div>
<div class="abs" style="left:1153.200px;top:758px;width:108.700px;height:43px;background:#007bff"></div>
<div class="t" style="left:1176.97px;top:768.00px;font-size:18.6px;color:#fff;letter-spacing:0.359px;-webkit-text-stroke:.25px;line-height:21px;">Update</div>
</div></div>
</body>
</html>
